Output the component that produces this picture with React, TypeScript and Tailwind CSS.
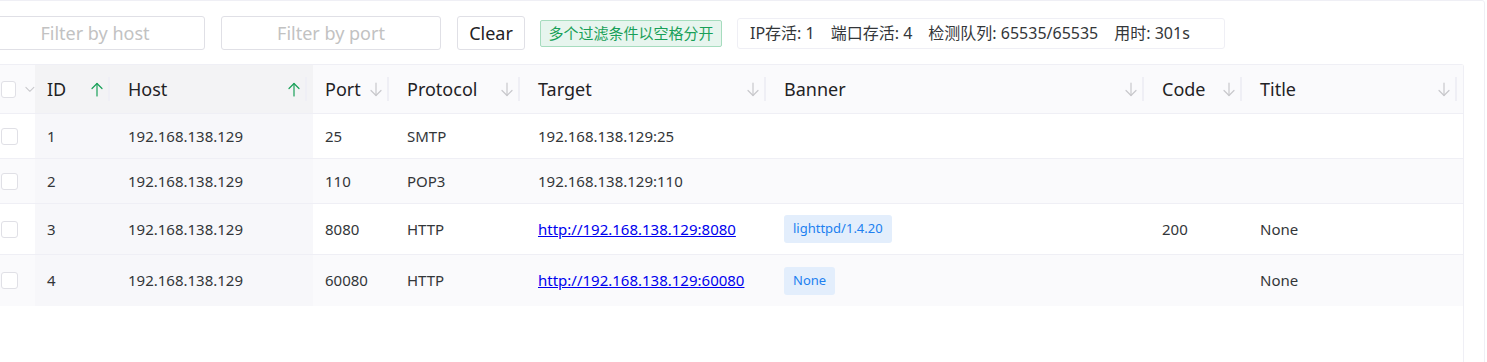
type Row = {
  id: number;
  host: string;
  port: number;
  protocol: string;
  target: string;
  link: boolean;
  banner?: string;
  code?: string;
  title?: string;
};

const ROWS: Row[] = [
  { id: 1, host: '192.168.138.129', port: 25, protocol: 'SMTP', target: '192.168.138.129:25', link: false },
  { id: 2, host: '192.168.138.129', port: 110, protocol: 'POP3', target: '192.168.138.129:110', link: false },
  {
    id: 3,
    host: '192.168.138.129',
    port: 8080,
    protocol: 'HTTP',
    target: 'http://192.168.138.129:8080',
    link: true,
    banner: 'lighttpd/1.4.20',
    code: '200',
    title: 'None',
  },
  {
    id: 4,
    host: '192.168.138.129',
    port: 60080,
    protocol: 'HTTP',
    target: 'http://192.168.138.129:60080',
    link: true,
    banner: 'None',
    title: 'None',
  },
];

const COLS = [
  { key: 'id', label: 'ID', width: 'w-[81px]', sorted: true },
  { key: 'host', label: 'Host', width: 'w-[197px]', sorted: true },
  { key: 'port', label: 'Port', width: 'w-[82px]', sorted: false },
  { key: 'protocol', label: 'Protocol', width: 'w-[131px]', sorted: false },
  { key: 'target', label: 'Target', width: 'w-[246px]', sorted: false },
  { key: 'banner', label: 'Banner', width: 'w-[378px]', sorted: false },
  { key: 'code', label: 'Code', width: 'w-[98px]', sorted: false },
  { key: 'title', label: 'Title', width: 'w-[215px]', sorted: false },
];

function Checkbox() {
  return <span className="block w-[17px] h-[17px] rounded-[3px] border border-[#e0e0e6] bg-white" />;
}

// thin sort arrow, as drawn by the table's sorter
function SortArrow({ up }: { up: boolean }) {
  return (
    <svg
      width="12"
      height="15"
      viewBox="0 0 12 15"
      fill="none"
      stroke="currentColor"
      strokeWidth="1.2"
      strokeLinecap="round"
      strokeLinejoin="round"
      className={up ? 'text-[#18a058]' : 'text-[#c8c8cc]'}
    >
      {up ? (
        <>
          <path d="M6 1.5V14" />
          <path d="M1 6.5L6 1.5L11 6.5" />
        </>
      ) : (
        <>
          <path d="M6 1V13.5" />
          <path d="M1 8.5L6 13.5L11 8.5" />
        </>
      )}
    </svg>
  );
}

function HeaderCell({ label, width, sorted }: { label: string; width: string; sorted: boolean }) {
  return (
    <div className={`${width} shrink-0 h-full flex items-center pl-3 pr-[6px] ${sorted ? 'bg-[#f3f3f5]' : ''}`}>
      <span className="text-[18px] text-[#1f2225]">{label}</span>
      <span className="flex-1" />
      <SortArrow up={sorted} />
      <span className="ml-[5px] w-[2px] h-6 bg-[#efeff5]" />
    </div>
  );
}

function Tag({ text }: { text: string }) {
  return (
    <span className="inline-flex items-center h-7 px-[9px] rounded-[3px] bg-[#e3eefc] text-[13px] text-[#2080f0]">
      {text}
    </span>
  );
}

export default function App() {
  return (
    <div
      className="w-[1487px] h-[362px] bg-white overflow-hidden text-[#333639]"
      style={{ fontFamily: '"Noto Sans", "Noto Sans CJK SC", sans-serif' }}
    >
      <div className="ml-[-34px] w-[1519px] h-[380px] border border-[#efeff5] rounded-[3px] pt-[15px] pl-[18px] pr-5">
        {/* toolbar */}
        <div className="flex items-center gap-4 h-[34px]">
          <input
            placeholder="Filter by host"
            className="w-[220px] h-[34px] rounded-[3px] border border-[#e0e0e6] text-center text-[18px] outline-none placeholder:text-[#c2c2c2]"
          />
          <input
            placeholder="Filter by port"
            className="w-[220px] h-[34px] rounded-[3px] border border-[#e0e0e6] text-center text-[18px] outline-none placeholder:text-[#c2c2c2]"
          />
          <button className="w-[68px] h-[34px] rounded-[3px] border border-[#e0e0e6] text-[18px] text-[#1f2225] bg-white">
            Clear
          </button>
          <span className="w-[182px] shrink-0 inline-flex items-center justify-center h-[27px] rounded-[2px] border border-[#a6dcbe] bg-[#e7f5ee] text-[15px] text-[#18a058] ml-[-1px]">
            多个过滤条件以空格分开
          </span>
          <div className="w-[488px] h-[31px] flex items-center gap-[16px] pl-[12px] rounded-[3px] border border-[#efeff5] text-[16px] text-[#333639] ml-[-1px]">
            <span>IP存活: 1</span>
            <span>端口存活: 4</span>
            <span>检测队列: 65535/65535</span>
            <span>用时: 301s</span>
          </div>
        </div>

        {/* table */}
        <div className="mt-[14px] h-[320px] border-t border-r border-[#efeff5] rounded-tr-[3px]">
          <div className="flex h-[49px] bg-[#fafafc] border-b border-[#efeff5]">
            <div className="w-[50px] shrink-0 flex items-center pl-4 gap-[9px]">
              <Checkbox />
              <svg
                width="11"
                height="7"
                viewBox="0 0 11 7"
                fill="none"
                stroke="#c8c8cc"
                strokeWidth="1.2"
                strokeLinecap="round"
                strokeLinejoin="round"
              >
                <path d="M1 1L5.5 5.5L10 1" />
              </svg>
            </div>
            {COLS.map((c) => (
              <HeaderCell key={c.key} label={c.label} width={c.width} sorted={c.sorted} />
            ))}
          </div>

          {ROWS.map((r, i) => {
            const striped = i % 2 === 1;
            const tall = r.link;
            return (
              <div
                key={r.id}
                className={`flex text-[15px] text-[#333639] ${tall ? 'h-[51px]' : 'h-[45px]'} ${
                  striped ? 'bg-[#fafafc]' : 'bg-white'
                } ${i < ROWS.length - 1 ? 'border-b border-[#efeff5]' : ''}`}
              >
                <div className="w-[50px] shrink-0 flex items-center pl-4">
                  <Checkbox />
                </div>
                <div className="w-[81px] shrink-0 flex items-center pl-3 bg-[#f7f7fa]">{r.id}</div>
                <div className="w-[197px] shrink-0 flex items-center pl-3 bg-[#f7f7fa]">{r.host}</div>
                <div className="w-[82px] shrink-0 flex items-center pl-3">{r.port}</div>
                <div className="w-[131px] shrink-0 flex items-center pl-3">{r.protocol}</div>
                <div className="w-[246px] shrink-0 flex items-center pl-3">
                  {r.link ? (
                    <a href="#" className="text-[#0000ee] underline">
                      {r.target}
                    </a>
                  ) : (
                    r.target
                  )}
                </div>
                <div className="w-[378px] shrink-0 flex items-center pl-3">{r.banner && <Tag text={r.banner} />}</div>
                <div className="w-[98px] shrink-0 flex items-center pl-3">{r.code}</div>
                <div className="w-[215px] shrink-0 flex items-center pl-3">{r.title}</div>
              </div>
            );
          })}
        </div>
      </div>
    </div>
  );
}
